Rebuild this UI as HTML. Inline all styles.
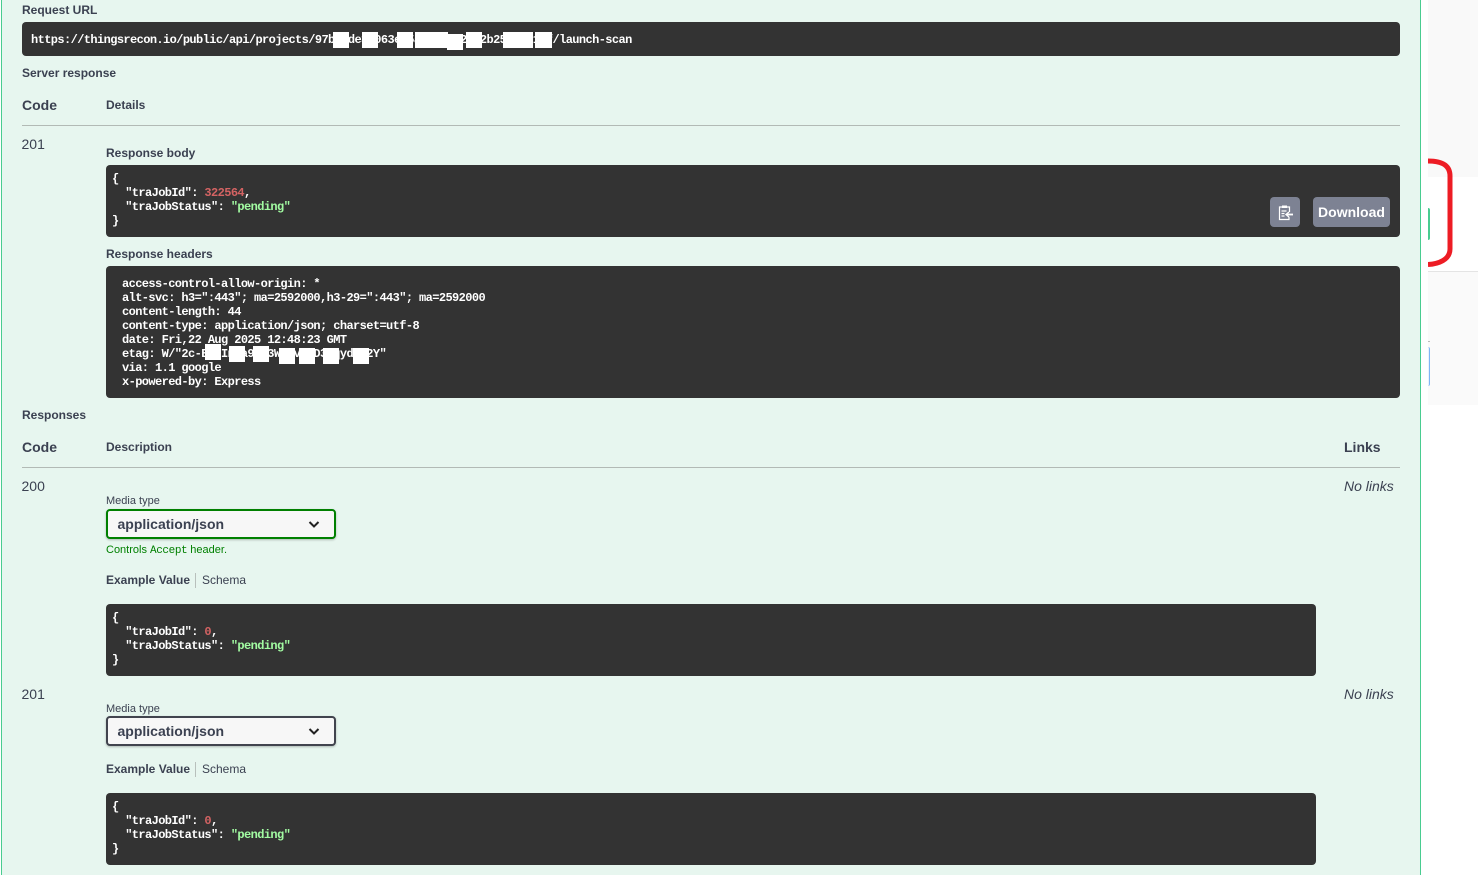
<!DOCTYPE html>
<html><head><meta charset="utf-8"><style>
html,body{margin:0;padding:0;width:1478px;height:875px;overflow:hidden;background:#fff}
body{position:relative;font-family:"Liberation Sans",Arial,sans-serif;color:#3b4151}
.a{position:absolute;white-space:pre}
.l{font-size:12px;font-weight:700;line-height:14px}
.c{font-size:14px;font-weight:700;line-height:16px}
.n{font-size:14px;line-height:16px}
.d{position:absolute;background:#333;border-radius:4px}
pre{position:absolute;margin:0;font:bold 12px/14px "Liberation Mono",monospace;letter-spacing:-.6px;color:#fff}
.r{color:#d36363}.g{color:#a2fca2}
.w{position:absolute;background:#fff}
.hr{position:absolute;height:1px;background:#b2bab5}
.sel{position:absolute;left:106px;width:230px;height:30px;box-sizing:border-box;background:#f7f7f7;border-radius:4px;box-shadow:0 1px 2px 0 rgba(0,0,0,.25)}
.sel span{position:absolute;left:9.5px;top:5px;font-size:14px;font-weight:700;line-height:17px}
.sel svg{position:absolute;right:13px;top:6px}
</style></head><body>
<div class="a" style="left:1428px;top:0;width:50px;height:177px;background:#f9f9f9"></div>
<div class="a" style="left:1428px;top:271px;width:50px;height:134px;background:#fafafa;border-top:1px solid #e4e4e4;box-sizing:border-box"></div>
<div class="a" style="left:1421px;top:0;width:7px;height:405px;background:#fff"></div>
<div class="a" style="left:1428px;top:208px;width:2px;height:32px;background:#49cc90;border-radius:0 2px 2px 0"></div>
<div class="a" style="left:1428px;top:347px;width:2px;height:39px;box-sizing:border-box;border-right:1px solid #7fb4f5;background:#eaf2fc;border-radius:0 2px 2px 0"></div>
<div class="a" style="left:1428px;top:341px;width:2px;height:1px;background:#bbb"></div>
<div class="a" style="left:1px;top:0;width:1420px;height:875px;box-sizing:border-box;background:#e7f6ef;border-left:1px solid #49cc90;border-right:1px solid #49cc90"></div>

<div class="a l" style="left:22px;top:3px">Request URL</div>
<div class="d" style="left:22px;top:22px;width:1378px;height:34px"></div>
<pre style="left:31px;top:33px">https://thingsrecon.io/public/api/projects/97b12de34063e-5abc-12321a2b25abcd1ef/launch-scan</pre>
<div class="w" style="left:333px;top:32px;width:16px;height:16px"></div>
<div class="w" style="left:362px;top:32px;width:16px;height:16px"></div>
<div class="w" style="left:397px;top:32px;width:16px;height:16px"></div>
<div class="w" style="left:415px;top:32px;width:33px;height:16px"></div>
<div class="w" style="left:447px;top:34px;width:16px;height:16px"></div>
<div class="w" style="left:466px;top:32px;width:16px;height:16px"></div>
<div class="w" style="left:503px;top:32px;width:30px;height:16px"></div>
<div class="w" style="left:535px;top:32px;width:17px;height:16px"></div>

<div class="a l" style="left:22px;top:66px">Server response</div>
<div class="a c" style="left:22px;top:97px">Code</div>
<div class="a l" style="left:106px;top:98px">Details</div>
<div class="hr" style="left:22px;top:125px;width:1378px"></div>
<div class="a n" style="left:21.5px;top:136px">201</div>
<div class="a l" style="left:106px;top:146px">Response body</div>
<div class="d" style="left:106px;top:165px;width:1294px;height:72px"></div>
<pre style="left:112px;top:172px">{
  "traJobId": <span class="r">322564</span>,
  "traJobStatus": <span class="g">"pending"</span>
}</pre>
<div class="a" style="left:1270px;top:197px;width:30px;height:30px;background:#7d8293;border-radius:4px"></div>
<svg class="a" style="left:1277px;top:204px" width="17" height="17" viewBox="0 0 17 17" fill="none" stroke="#fff" stroke-width="1.2"><path d="M5 3H2.5v12.5H12V13"/><path d="M10 3h2.5v5"/><rect x="5" y="1.5" width="5" height="2.5" fill="#fff" stroke="none"/><path d="M4.5 7h5M4.5 9.5h3M4.5 12h3"/><path d="M16 10.5H9.5" stroke-width="1.8"/><path d="M12 8l-3 2.5 3 2.5" stroke-width="1.4"/></svg>
<div class="a" style="left:1313px;top:197px;width:77px;height:30px;background:#7d8293;border-radius:4px;color:#fff;font-size:14px;font-weight:700;line-height:30px;text-align:center">Download</div>

<div class="a l" style="left:106px;top:247px">Response headers</div>
<div class="d" style="left:106px;top:266px;width:1294px;height:132px"></div>
<pre style="left:122px;top:277px">access-control-allow-origin: *
alt-svc: h3=":443"; ma=2592000,h3-29=":443"; ma=2592000
content-length: 44
content-type: application/json; charset=utf-8
date: Fri,22 Aug 2025 12:48:23 GMT
etag: W/"2c-EabInca9xy3WabvcdD3zqydkm2Y"
via: 1.1 google
x-powered-by: Express</pre>
<div class="w" style="left:205px;top:344px;width:16px;height:16px"></div>
<div class="w" style="left:229px;top:346px;width:16px;height:16px"></div>
<div class="w" style="left:253px;top:346px;width:16px;height:16px"></div>
<div class="w" style="left:279px;top:348px;width:16px;height:16px"></div>
<div class="w" style="left:299px;top:348px;width:16px;height:16px"></div>
<div class="w" style="left:323px;top:348px;width:16px;height:16px"></div>
<div class="w" style="left:353px;top:348px;width:16px;height:16px"></div>

<div class="a l" style="left:22px;top:408px">Responses</div>
<div class="a c" style="left:22px;top:439px">Code</div>
<div class="a l" style="left:106px;top:440px">Description</div>
<div class="a c" style="left:1344px;top:439px">Links</div>
<div class="hr" style="left:22px;top:467px;width:1378px"></div>

<div class="a n" style="left:21.5px;top:478px">200</div>
<div class="a n" style="left:1344px;top:478px;font-style:italic">No links</div>
<div class="a" style="left:106px;top:494px;font-size:11px;line-height:14px">Media type</div>
<div class="sel" style="top:509px;border:2px solid #008000"><span>application/json</span><svg width="14" height="14" viewBox="0 0 14 14" fill="none" stroke="#222" stroke-width="2"><path d="M2.5 5l4.500 4.500L11.500 5"/></svg></div>
<div class="a" style="left:106px;top:543px;font-size:11px;line-height:14px;color:#008000">Controls <span style="font:11px/14px 'Liberation Mono',monospace;letter-spacing:-.4px">Accept</span> header.</div>
<div class="a l" style="left:106px;top:573px">Example Value</div>
<div class="a" style="left:195px;top:573px;width:1px;height:15px;background:#b8c0bc"></div>
<div class="a" style="left:202px;top:573px;font-size:12px;line-height:14px">Schema</div>
<div class="d" style="left:106px;top:604px;width:1210px;height:72px"></div>
<pre style="left:112px;top:611px">{
  "traJobId": <span class="r">0</span>,
  "traJobStatus": <span class="g">"pending"</span>
}</pre>

<div class="a n" style="left:21.5px;top:686px">201</div>
<div class="a n" style="left:1344px;top:686px;font-style:italic">No links</div>
<div class="a" style="left:106px;top:702px;font-size:11px;line-height:14px">Media type</div>
<div class="sel" style="top:716px;border:2px solid #41444e"><span>application/json</span><svg width="14" height="14" viewBox="0 0 14 14" fill="none" stroke="#222" stroke-width="2"><path d="M2.500 5l4.500 4.500L11.500 5"/></svg></div>
<div class="a l" style="left:106px;top:762px">Example Value</div>
<div class="a" style="left:195px;top:762px;width:1px;height:15px;background:#b8c0bc"></div>
<div class="a" style="left:202px;top:762px;font-size:12px;line-height:14px">Schema</div>
<div class="d" style="left:106px;top:793px;width:1210px;height:72px"></div>
<pre style="left:112px;top:800px">{
  "traJobId": <span class="r">0</span>,
  "traJobStatus": <span class="g">"pending"</span>
}</pre>

<svg class="a" style="left:1428px;top:155px" width="30" height="116" viewBox="0 0 30 116" fill="none"><path d="M0 6C10 6 22 8 22 21V94C22 105 10 109 0 109.500" stroke="#ed1c24" stroke-width="5"/></svg>
</body></html>
